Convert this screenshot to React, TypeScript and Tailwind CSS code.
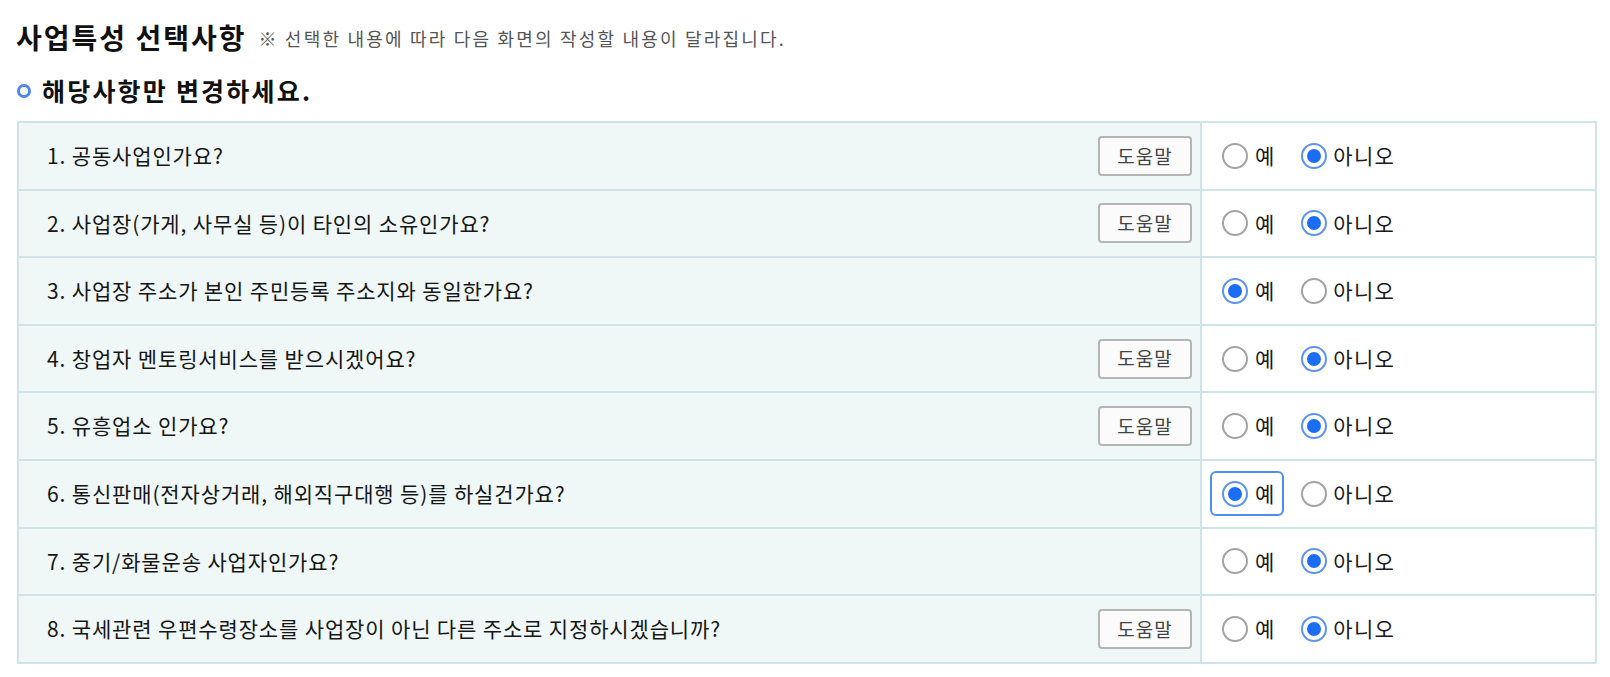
import React from 'react';

type Question = {
  label: string;
  help: boolean;
  answer: 'yes' | 'no';
  focused?: boolean;
};

const questions: Question[] = [
  { label: '1. 공동사업인가요?', help: true, answer: 'no' },
  { label: '2. 사업장(가게, 사무실 등)이 타인의 소유인가요?', help: true, answer: 'no' },
  { label: '3. 사업장 주소가 본인 주민등록 주소지와 동일한가요?', help: false, answer: 'yes' },
  { label: '4. 창업자 멘토링서비스를 받으시겠어요?', help: true, answer: 'no' },
  { label: '5. 유흥업소 인가요?', help: true, answer: 'no' },
  { label: '6. 통신판매(전자상거래, 해외직구대행 등)를 하실건가요?', help: false, answer: 'yes', focused: true },
  { label: '7. 중기/화물운송 사업자인가요?', help: false, answer: 'no' },
  { label: '8. 국세관련 우편수령장소를 사업장이 아닌 다른 주소로 지정하시겠습니까?', help: true, answer: 'no' },
];

const Radio = ({ checked }: { checked: boolean }) =>
  checked ? (
    <span className="flex h-[26px] w-[26px] items-center justify-center rounded-full border-2 border-[#5b93f5] bg-white">
      <span className="h-[14px] w-[14px] rounded-full bg-[#1b6ef3]" />
    </span>
  ) : (
    <span className="h-[26px] w-[26px] rounded-full border-2 border-[#a3a3a3] bg-white" />
  );

const App = () => {
  return (
    <div
      className="min-h-screen bg-white px-[17px] text-[#1a1a1a]"
      style={{ fontFamily: '"Noto Sans CJK KR", "Noto Sans", sans-serif' }}
    >
      {/* Title */}
      <div className="mt-[19px] flex h-[36px] items-center">
        <h1 className="-ml-[1px] text-[28px] font-bold tracking-[2px] text-[#111]">사업특성 선택사항</h1>
        <span className="ml-[12px] mt-[3px] text-[18px] tracking-[2.2px] text-[#555]">
          ※ 선택한 내용에 따라 다음 화면의 작성할 내용이 달라집니다.
        </span>
      </div>

      {/* Sub heading */}
      <div className="mt-[20px] flex h-[32px] items-center">
        <span className="h-[14px] w-[14px] rounded-full border-[3px] border-[#4f86ee]" />
        <h2 className="ml-[11px] text-[25px] font-bold tracking-[2.2px] text-[#111]">해당사항만 변경하세요.</h2>
      </div>

      {/* Table */}
      <div className="mt-[14px] w-[1580px] border-x-2 border-t-2 border-[#cfe4e6]">
        {questions.map((q) => (
          <div key={q.label} className="grid h-[67.6px] grid-cols-[1181px_1fr] border-b-2 border-[#cfe4e6]">
            <div className="flex items-center justify-between bg-[#eff8f7] pl-[28px] pr-[8px]">
              <span className="text-[21px] tracking-[0.85px] text-[#161616]">{q.label}</span>
              {q.help && (
                <button className="flex h-[40px] w-[94px] items-center justify-center rounded-[4px] border-2 border-[#b5b5b5] bg-[#fbfbfb] text-[19px] tracking-[1px] text-[#444]">
                  도움말
                </button>
              )}
            </div>
            <div className="flex items-center border-l-2 border-[#cfe4e6] bg-white pl-[8px]">
              <label
                className={
                  q.focused
                    ? 'flex h-[45px] items-center rounded-[6px] border-2 border-[#4c8df6] pl-[10px] pr-[8px]'
                    : 'flex h-[45px] items-center border-2 border-transparent pl-[10px] pr-[8px]'
                }
              >
                <Radio checked={q.answer === 'yes'} />
                <span className="ml-[7px] text-[21px]">예</span>
              </label>
              <label className="ml-[17px] flex items-center">
                <Radio checked={q.answer === 'no'} />
                <span className="ml-[6px] text-[21px] tracking-[1.3px]">아니오</span>
              </label>
            </div>
          </div>
        ))}
      </div>
    </div>
  );
};

export default App;
